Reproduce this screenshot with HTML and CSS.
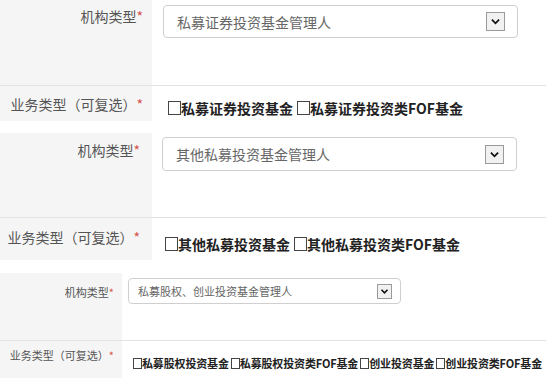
FILE: index.html
```html
<!DOCTYPE html>
<html lang="zh-CN">
<head>
<meta charset="utf-8">
<title>机构类型</title>
<link rel="stylesheet" href="styles.css">
</head>
<body>
<section class="form big first">
  <div class="row type">
    <div class="label">机构类型<span class="req">*</span></div>
    <div class="field">
      <div class="select">
        <span class="value">私募证券投资基金管理人</span>
        <span class="arrow"><svg viewBox="0 0 19 19"><path d="M5.5 7.5 L9.5 11.5 L13.5 7.5" fill="none" stroke="#111" stroke-width="2"/></svg></span>
      </div>
    </div>
  </div>
  <div class="row biz">
    <div class="label">业务类型（可复选）<span class="req">*</span></div>
    <div class="field checks">
      <span class="check"><span class="box"></span>私募证券投资基金</span>
      <span class="check"><span class="box"></span>私募证券投资类FOF基金</span>
    </div>
  </div>
</section>

<section class="form big second">
  <div class="row type">
    <div class="label">机构类型<span class="req">*</span></div>
    <div class="field">
      <div class="select">
        <span class="value">其他私募投资基金管理人</span>
        <span class="arrow"><svg viewBox="0 0 19 19"><path d="M5.5 7.5 L9.5 11.5 L13.5 7.5" fill="none" stroke="#111" stroke-width="2"/></svg></span>
      </div>
    </div>
  </div>
  <div class="row biz">
    <div class="label">业务类型（可复选）<span class="req">*</span></div>
    <div class="field checks">
      <span class="check"><span class="box"></span>其他私募投资基金</span>
      <span class="check"><span class="box"></span>其他私募投资类FOF基金</span>
    </div>
  </div>
</section>

<section class="form small">
  <div class="row type">
    <div class="label">机构类型<span class="req">*</span></div>
    <div class="field">
      <div class="select">
        <span class="value">私募股权、创业投资基金管理人</span>
        <span class="arrow"><svg viewBox="0 0 15 15"><path d="M4 5.5 L7.5 9 L11 5.5" fill="none" stroke="#111" stroke-width="1.8"/></svg></span>
      </div>
    </div>
  </div>
  <div class="row biz">
    <div class="label">业务类型（可复选）<span class="req">*</span></div>
    <div class="field checks">
      <span class="check"><span class="box"></span>私募股权投资基金</span>
      <span class="check"><span class="box"></span>私募股权投资类FOF基金</span>
      <span class="check"><span class="box"></span>创业投资基金</span>
      <span class="check"><span class="box"></span>创业投资类FOF基金</span>
    </div>
  </div>
</section>
</body>
</html>
```
FILE: styles.css
```css
html, body {
  margin: 0;
  padding: 0;
  background: #fff;
}
body {
  width: 546px;
  height: 378px;
  overflow: hidden;
  font-family: "Noto Sans CJK SC", "Noto Sans", sans-serif;
}
.form {
  display: flex;
  flex-direction: column;
}
.row {
  display: grid;
  white-space: nowrap;
}
.label {
  background: #f5f5f5;
  text-align: right;
  color: #555;
}
.req {
  color: #d9534f;
}
.type {
  border-bottom: 1px solid #e3e3e3;
}
.select {
  box-sizing: border-box;
  display: flex;
  align-items: center;
  justify-content: space-between;
  border: 1px solid #cfcfcf;
  border-radius: 4px;
  background: #fff;
  color: #666;
}
.arrow {
  box-sizing: border-box;
  display: flex;
  border: 1px solid #9a9a9a;
  background: #f1f1f1;
}
.arrow svg {
  width: 100%;
  height: 100%;
  display: block;
}
.checks {
  display: flex;
  color: #222;
  font-weight: bold;
}
.check {
  display: flex;
  align-items: center;
}
.box {
  box-sizing: border-box;
  display: inline-block;
  border: 1px solid #444;
  background: #fff;
}

/* large sections */
.big .row {
  grid-template-columns: 152px 1fr;
}
.big .label {
  font-size: 14px;
  line-height: 18px;
  padding-right: 9px;
}
.big .type {
  height: 86px;
  box-sizing: border-box;
}
.big .type .label {
  padding-top: 7px;
}
.big .type .field {
  padding: 5px 0 0 11px;
}
.big .select {
  width: 355px;
  height: 33px;
  padding: 0 12px 0 13px;
  font-size: 14px;
}
.big .arrow {
  width: 19px;
  height: 19px;
}
.big .biz .label {
  padding-top: 9px;
}
.big .checks {
  padding: 9px 0 0 16px;
  font-size: 14px;
  line-height: 18px;
  gap: 4px;
}
.big .box {
  width: 13px;
  height: 14px;
}
.first .biz {
  height: 35px;
}
.first {
  margin-bottom: 12px;
}
.second .type {
  height: 85px;
}
.second .type .label {
  padding: 8px 12px 0 0;
}
.second .type .field {
  padding: 4px 0 0 10px;
}
.second .select {
  height: 34px;
}
.second .biz {
  height: 42px;
}
.second .biz .label {
  padding: 10px 12px 0 0;
}
.second .checks {
  padding: 10px 0 0 13px;
}
.second {
  margin-bottom: 13px;
}

/* small section */
.small .row {
  grid-template-columns: 122px 1fr;
}
.small .label {
  font-size: 11px;
  line-height: 14px;
  padding-right: 8px;
}
.small .type {
  height: 68px;
  box-sizing: border-box;
}
.small .type .label {
  padding-top: 12px;
}
.small .type .field {
  padding: 5px 0 0 6px;
}
.small .select {
  width: 273px;
  height: 26px;
  padding: 0 8px 0 9px;
  font-size: 11px;
}
.small .arrow {
  width: 15px;
  height: 15px;
}
.small .biz {
  height: 37px;
}
.small .biz .label {
  padding-top: 7px;
}
.small .checks {
  padding: 7px 0 0 11px;
  font-size: 11px;
  line-height: 14px;
  gap: 2px;
  letter-spacing: -0.15px;
}
.small .box {
  width: 9px;
  height: 11px;
}
```
